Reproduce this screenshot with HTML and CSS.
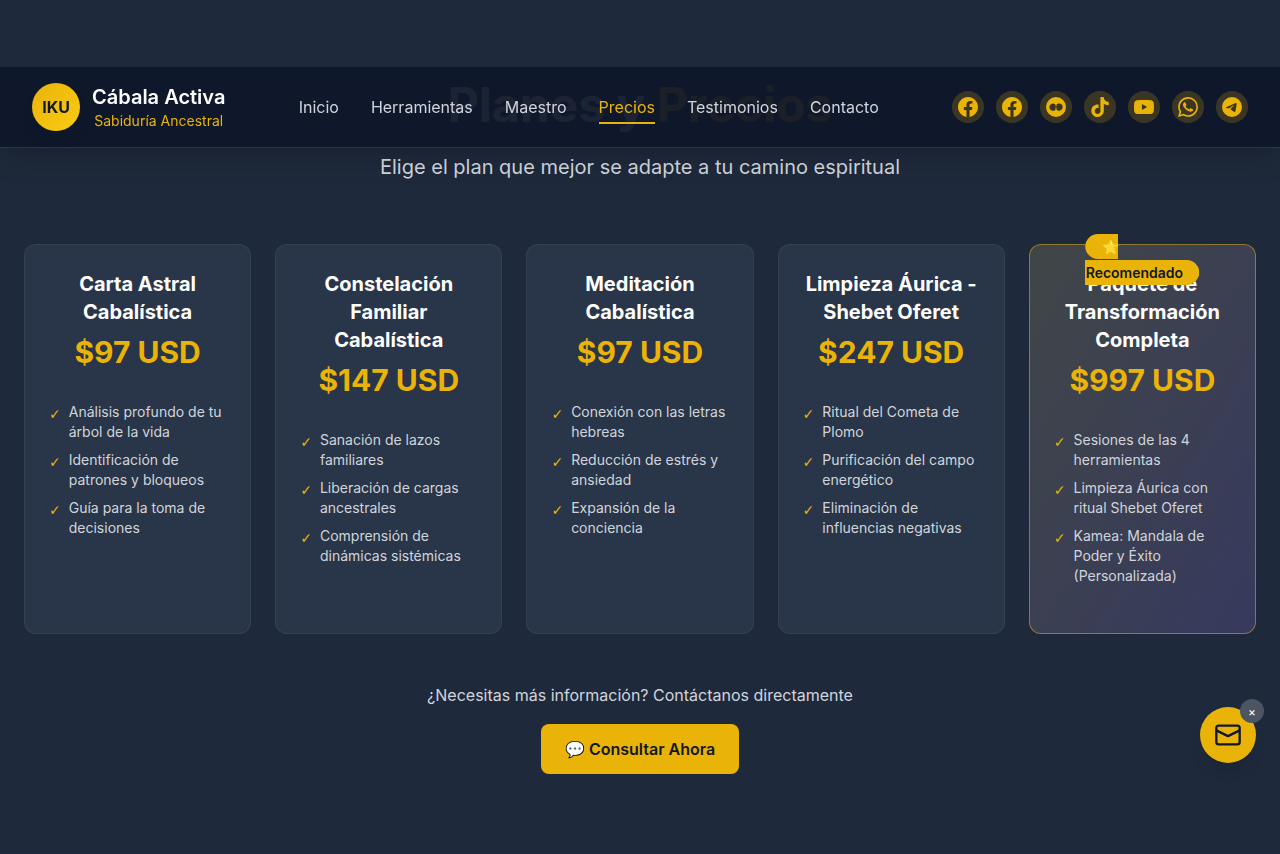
FILE: index.html
```html
<!DOCTYPE html>
<html lang="es">
<head>
<meta charset="utf-8">
<meta name="viewport" content="width=device-width, initial-scale=1">
<title>Cábala Activa</title>
<link rel="stylesheet" href="styles.css">
</head>
<body>
<header class="header">
  <a class="brand" href="#inicio">
    <span class="brand-logo">IKU</span>
    <span class="brand-text">
      <span class="brand-name">Cábala Activa</span>
      <span class="brand-tag">Sabiduría Ancestral</span>
    </span>
  </a>
  <nav class="nav">
    <a class="nav-link" href="#inicio">Inicio</a>
    <a class="nav-link" href="#herramientas">Herramientas</a>
    <a class="nav-link" href="#maestro">Maestro</a>
    <a class="nav-link active" href="#precios">Precios</a>
    <a class="nav-link" href="#testimonios">Testimonios</a>
    <a class="nav-link" href="#contacto">Contacto</a>
  </nav>
  <div class="social">
    <a class="social-link" href="#" aria-label="Facebook"><svg viewBox="0 0 24 24"><path d="M24 12.073c0-6.627-5.373-12-12-12s-12 5.373-12 12c0 5.99 4.388 10.954 10.125 11.854v-8.385H7.078v-3.47h3.047V9.43c0-3.007 1.792-4.669 4.533-4.669 1.312 0 2.686.235 2.686.235v2.953H15.83c-1.491 0-1.956.925-1.956 1.874v2.25h3.328l-.532 3.47h-2.796v8.385C19.612 23.027 24 18.062 24 12.073z"/></svg></a>
    <a class="social-link" href="#" aria-label="Grupo de Facebook"><svg viewBox="0 0 24 24"><path d="M24 12.073c0-6.627-5.373-12-12-12s-12 5.373-12 12c0 5.99 4.388 10.954 10.125 11.854v-8.385H7.078v-3.47h3.047V9.43c0-3.007 1.792-4.669 4.533-4.669 1.312 0 2.686.235 2.686.235v2.953H15.83c-1.491 0-1.956.925-1.956 1.874v2.25h3.328l-.532 3.47h-2.796v8.385C19.612 23.027 24 18.062 24 12.073z"/></svg></a>
    <a class="social-link" href="#" aria-label="Comunidad"><svg viewBox="0 0 24 24"><path fill-rule="evenodd" d="M12 0a12 12 0 1 0 0 24 12 12 0 0 0 0-24zM8.400 7.700a4.400 4.400 0 0 1 3.600 1.900 4.400 4.400 0 1 1 0 5 4.400 4.400 0 1 1-3.600-6.900z"/><path d="M11.300 9.200h1.400v2h-1.400zM11.300 13h1.400v2h-1.400z"/></svg></a>
    <a class="social-link" href="#" aria-label="TikTok"><svg viewBox="0 0 24 24"><path d="M12.525.02c1.31-.02 2.610-.01 3.910-.02.080 1.530.630 3.090 1.750 4.170 1.120 1.110 2.700 1.620 4.240 1.790v4.030c-1.440-.050-2.890-.350-4.200-.970-.570-.260-1.100-.590-1.620-.930-.010 2.920.010 5.840-.020 8.750-.080 1.400-.540 2.790-1.350 3.940-1.310 1.920-3.580 3.170-5.910 3.210-1.430.080-2.860-.310-4.080-1.030-2.020-1.190-3.440-3.370-3.650-5.710-.020-.5-.030-1-.010-1.490.180-1.900 1.120-3.720 2.580-4.960 1.660-1.440 3.980-2.130 6.150-1.720.020 1.480-.040 2.960-.040 4.440-.990-.320-2.150-.230-3.020.370-.630.410-1.110 1.040-1.360 1.750-.210.510-.150 1.070-.140 1.610.240 1.640 1.820 3.020 3.500 2.870 1.120-.010 2.190-.660 2.770-1.610.190-.330.400-.670.410-1.060.1-1.790.060-3.570.070-5.360.010-4.030-.010-8.050.020-12.070z"/></svg></a>
    <a class="social-link" href="#" aria-label="YouTube"><svg viewBox="0 0 24 24"><path d="M23.498 6.186a3.016 3.016 0 0 0-2.122-2.136C19.505 3.545 12 3.545 12 3.545s-7.505 0-9.377.505A3.017 3.017 0 0 0 .502 6.186C0 8.070 0 12 0 12s0 3.930.502 5.814a3.016 3.016 0 0 0 2.122 2.136c1.871.505 9.376.505 9.376.505s7.505 0 9.377-.505a3.015 3.015 0 0 0 2.122-2.136C24 15.930 24 12 24 12s0-3.930-.502-5.814zM9.545 15.568V8.432L15.818 12l-6.273 3.568z"/></svg></a>
    <a class="social-link" href="#" aria-label="WhatsApp"><svg viewBox="0 0 24 24"><path d="M17.472 14.382c-.297-.149-1.758-.867-2.030-.967-.273-.099-.471-.148-.670.150-.197.297-.767.966-.940 1.164-.173.199-.347.223-.644.075-.297-.150-1.255-.463-2.390-1.475-.883-.788-1.480-1.761-1.653-2.059-.173-.297-.018-.458.130-.606.134-.133.298-.347.446-.520.149-.174.198-.298.298-.497.099-.198.050-.371-.025-.520-.075-.149-.669-1.612-.916-2.207-.242-.579-.487-.500-.669-.510-.173-.008-.371-.010-.570-.010-.198 0-.520.074-.792.372-.272.297-1.040 1.016-1.040 2.479 0 1.462 1.065 2.875 1.213 3.074.149.198 2.096 3.200 5.077 4.487.709.306 1.262.489 1.694.625.712.227 1.360.195 1.871.118.571-.085 1.758-.719 2.006-1.413.248-.694.248-1.289.173-1.413-.074-.124-.272-.198-.570-.347m-5.421 7.403h-.004a9.870 9.870 0 0 1-5.031-1.378l-.361-.214-3.741.982.998-3.648-.235-.374a9.860 9.860 0 0 1-1.510-5.260c.001-5.450 4.436-9.884 9.888-9.884 2.640 0 5.122 1.030 6.988 2.898a9.825 9.825 0 0 1 2.893 6.994c-.003 5.450-4.437 9.884-9.885 9.884m8.413-18.297A11.815 11.815 0 0 0 12.050 0C5.495 0 .160 5.335.157 11.892c0 2.096.547 4.142 1.588 5.945L.057 24l6.305-1.654a11.882 11.882 0 0 0 5.683 1.448h.005c6.554 0 11.890-5.335 11.893-11.893a11.821 11.821 0 0 0-3.480-8.413Z"/></svg></a>
    <a class="social-link" href="#" aria-label="Telegram"><svg viewBox="0 0 24 24"><path d="M11.944 0A12 12 0 0 0 0 12a12 12 0 0 0 12 12 12 12 0 0 0 12-12A12 12 0 0 0 12 0a12 12 0 0 0-.056 0zm4.962 7.224c.1-.002.321.023.465.140a.506.506 0 0 1 .171.325c.016.093.036.306.020.472-.180 1.898-.962 6.502-1.360 8.627-.168.900-.499 1.201-.820 1.230-.696.065-1.225-.460-1.900-.902-1.056-.693-1.653-1.124-2.678-1.800-1.185-.780-.417-1.210.258-1.910.177-.184 3.247-2.977 3.307-3.230.007-.032.014-.150-.056-.212s-.174-.041-.249-.024c-.106.024-1.793 1.140-5.061 3.345-.480.330-.913.490-1.302.480-.428-.008-1.252-.241-1.865-.440-.752-.245-1.349-.374-1.297-.789.027-.216.325-.437.893-.663 3.498-1.524 5.830-2.529 6.998-3.014 3.332-1.386 4.025-1.627 4.476-1.635z"/></svg></a>
  </div>
</header>

<main class="pricing" id="precios">
  <h2 class="title">Planes y <span class="accent">Precios</span></h2>
  <p class="subtitle">Elige el plan que mejor se adapte a tu camino espiritual</p>

  <div class="plans">
    <article class="card">
      <h3 class="card-title">Carta Astral Cabalística</h3>
      <p class="price">$97 USD</p>
      <ul class="features">
        <li class="feature">Análisis profundo de tu árbol de la vida</li>
        <li class="feature">Identificación de patrones y bloqueos</li>
        <li class="feature">Guía para la toma de decisiones</li>
      </ul>
    </article>
    <article class="card">
      <h3 class="card-title">Constelación Familiar Cabalística</h3>
      <p class="price">$147 USD</p>
      <ul class="features">
        <li class="feature">Sanación de lazos familiares</li>
        <li class="feature">Liberación de cargas ancestrales</li>
        <li class="feature">Comprensión de dinámicas sistémicas</li>
      </ul>
    </article>
    <article class="card">
      <h3 class="card-title">Meditación Cabalística</h3>
      <p class="price">$97 USD</p>
      <ul class="features">
        <li class="feature">Conexión con las letras hebreas</li>
        <li class="feature">Reducción de estrés y ansiedad</li>
        <li class="feature">Expansión de la conciencia</li>
      </ul>
    </article>
    <article class="card">
      <h3 class="card-title">Limpieza Áurica - Shebet Oferet</h3>
      <p class="price">$247 USD</p>
      <ul class="features">
        <li class="feature">Ritual del Cometa de Plomo</li>
        <li class="feature">Purificación del campo energético</li>
        <li class="feature">Eliminación de influencias negativas</li>
      </ul>
    </article>
    <article class="card featured">
      <div class="badge"><span class="badge-label">⭐ Recomendado</span></div>
      <h3 class="card-title">Paquete de Transformación Completa</h3>
      <p class="price">$997 USD</p>
      <ul class="features">
        <li class="feature">Sesiones de las 4 herramientas</li>
        <li class="feature">Limpieza Áurica con ritual Shebet Oferet</li>
        <li class="feature">Kamea: Mandala de Poder y Éxito (Personalizada)</li>
      </ul>
    </article>
  </div>

  <div class="cta">
    <p class="cta-text">¿Necesitas más información? Contáctanos directamente</p>
    <button class="cta-button" type="button">💬 Consultar Ahora</button>
  </div>
</main>

<div class="float">
  <button class="float-button" type="button" aria-label="Enviar mensaje"><svg viewBox="0 0 24 24"><rect x="2" y="4" width="20" height="16" rx="2"/><path d="M2 8l10 5 10-5"/></svg></button>
  <button class="float-close" type="button" aria-label="Cerrar">×</button>
</div>
</body>
</html>
```
FILE: styles.css
```css
* {
  box-sizing: border-box;
  margin: 0;
  padding: 0;
}

body {
  min-height: 100vh;
  background: #1e293b;
  color: #fff;
  font-family: Inter, "Liberation Sans", sans-serif;
  font-size: 16px;
  line-height: 24px;
}

a {
  color: inherit;
  text-decoration: none;
}

button {
  border: 0;
  font: inherit;
  cursor: pointer;
}

.header {
  position: fixed;
  top: 67px;
  left: 0;
  right: 0;
  z-index: 10;
  display: flex;
  align-items: center;
  justify-content: space-between;
  padding: 16px 32px;
  background: rgba(15, 23, 42, 0.95);
  border-bottom: 1px solid rgba(234, 179, 8, 0.2);
  box-shadow: 0 20px 25px -5px rgba(0, 0, 0, 0.1), 0 8px 10px -6px rgba(0, 0, 0, 0.1);
}

.brand {
  display: flex;
  align-items: center;
  gap: 12px;
}

.brand-logo {
  display: grid;
  place-items: center;
  width: 48px;
  height: 48px;
  border-radius: 50%;
  background: linear-gradient(135deg, #eab308, #facc15);
  box-shadow: 0 10px 15px -3px rgba(0, 0, 0, 0.1);
  color: #111827;
  font-weight: 700;
}

.brand-text {
  display: flex;
  flex-direction: column;
  align-items: center;
}

.brand-name {
  font-size: 20px;
  font-weight: 600;
  line-height: 28px;
}

.brand-tag {
  color: #eab308;
  font-size: 14px;
  line-height: 20px;
}

.nav {
  display: flex;
  gap: 32px;
  color: #d1d5db;
}

.nav-link {
  padding: 5px 0 3px;
  border-bottom: 2px solid transparent;
}

.nav-link.active {
  border-color: #eab308;
  color: #eab308;
}

.social {
  display: flex;
  gap: 12px;
}

.social-link {
  display: grid;
  place-items: center;
  width: 32px;
  height: 32px;
  border-radius: 50%;
  background: rgba(234, 179, 8, 0.2);
}

.social-link svg {
  width: 20px;
  height: 20px;
  fill: #eab308;
}

.pricing {
  padding: 81px 24px 80px;
  text-align: center;
}

.title {
  margin-bottom: 24px;
  font-size: 48px;
  font-weight: 700;
  line-height: 48px;
}

.accent {
  color: #eab308;
}

.subtitle {
  margin-bottom: 63px;
  color: #d1d5db;
  font-size: 20px;
  line-height: 28px;
}

.plans {
  display: grid;
  grid-template-columns: repeat(5, 1fr);
  gap: 24px;
  margin-bottom: 49px;
}

.card {
  position: relative;
  padding: 25px 24px 23px;
  border: 1px solid rgba(75, 85, 99, 0.4);
  border-radius: 12px;
  background: rgba(51, 65, 85, 0.5);
}

.card.featured {
  border-color: rgba(234, 179, 8, 0.5);
  background:
    linear-gradient(to bottom right, rgba(234, 179, 8, 0.1), rgba(147, 51, 234, 0.1)),
    rgba(60, 76, 98, 0.5);
}

.badge {
  position: absolute;
  top: -12px;
  left: 50%;
  transform: translateX(-50%);
  line-height: 26px;
  text-align: left;
}

.badge-label {
  padding: 4px 16px;
  border-radius: 999px;
  background: #eab308;
  color: #111827;
  font-size: 14px;
  font-weight: 600;
  line-height: 20px;
}

.card-title {
  margin-bottom: 8px;
  font-size: 20px;
  font-weight: 700;
  line-height: 28px;
}

.price {
  margin-bottom: 32px;
  color: #eab308;
  font-size: 30px;
  font-weight: 700;
  line-height: 36px;
}

.features {
  display: flex;
  flex-direction: column;
  gap: 8px;
  margin-bottom: 24px;
  color: #d1d5db;
  font-size: 14px;
  line-height: 20px;
  list-style: none;
  text-align: left;
}

.feature {
  display: flex;
  gap: 8px;
}

.feature::before {
  content: "✓";
  padding-top: 2px;
  color: #eab308;
  font-family: "DejaVu Sans", sans-serif;
}

.cta-text {
  margin-bottom: 17px;
  color: #d1d5db;
}

.cta-button {
  padding: 13px 24px;
  border-radius: 8px;
  background: #eab308;
  color: #111827;
  font-weight: 600;
}

.float {
  position: fixed;
  right: 24px;
  bottom: 91px;
  z-index: 20;
}

.float-button {
  display: grid;
  place-items: center;
  width: 56px;
  height: 56px;
  border-radius: 50%;
  background: #eab308;
  box-shadow: 0 10px 15px -3px rgba(0, 0, 0, 0.1), 0 4px 6px -4px rgba(0, 0, 0, 0.1);
}

.float-button svg {
  width: 28px;
  height: 28px;
  fill: none;
  stroke: #111827;
  stroke-width: 2;
  stroke-linejoin: round;
}

.float-close {
  position: absolute;
  top: -8px;
  right: -8px;
  width: 24px;
  height: 24px;
  border-radius: 50%;
  background: #4b5563;
  color: #fff;
  font-size: 12px;
  line-height: 26px;
}
```
